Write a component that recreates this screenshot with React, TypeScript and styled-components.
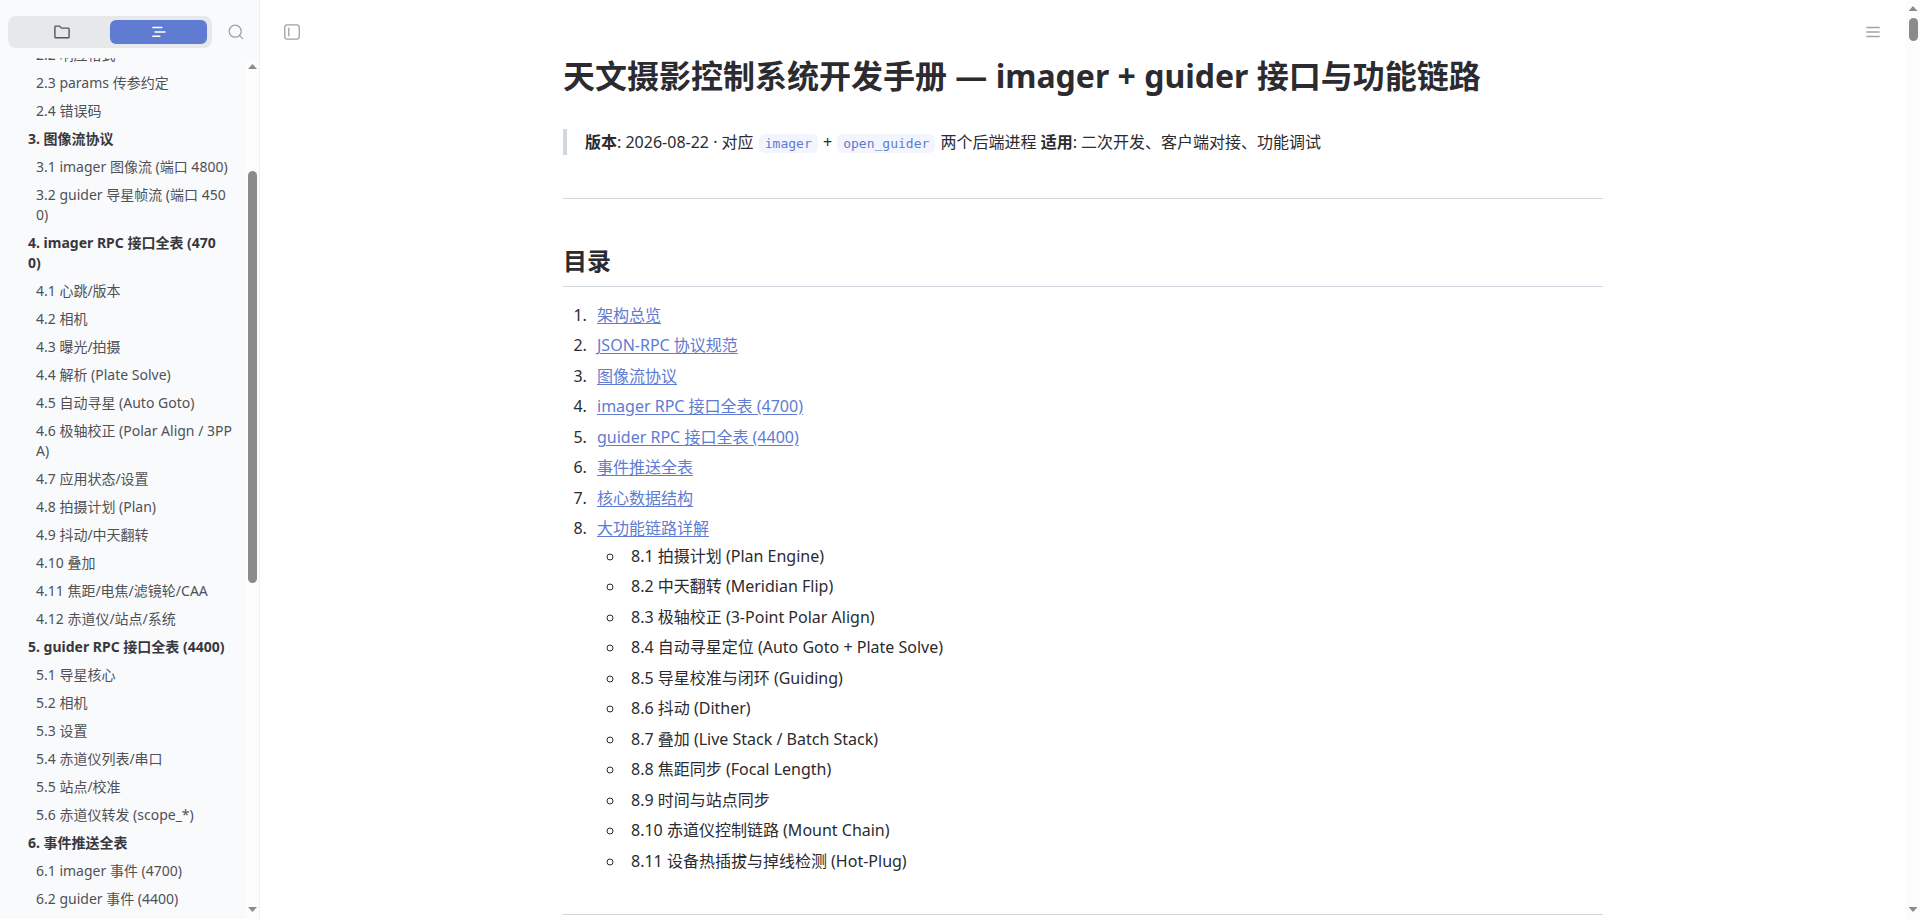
import React from "react";
import styled, { createGlobalStyle } from "styled-components";

const sans = `"Noto Sans", "Noto Sans CJK SC", sans-serif`;
const mono = `"DejaVu Sans Mono", "Noto Sans CJK SC", monospace`;

const GlobalStyle = createGlobalStyle`
  *, *::before, *::after { box-sizing: border-box; }
  body { margin: 0; background: #fff; font-family: ${sans}; color: #2b2b30; }
  button { border: 0; padding: 0; background: none; font: inherit; cursor: pointer; }
`;

const Shell = styled.div`
  display: flex;
  height: 100vh;
  overflow: hidden;
`;

const Sidebar = styled.aside`
  display: flex;
  flex-direction: column;
  flex: 0 0 260px;
  border-right: 1px solid #eeeff1;
  background: #f9fafc;
`;

const SidebarHeader = styled.div`
  display: flex;
  align-items: center;
  height: 58px;
  padding: 6px 15px 0 8px;
  gap: 16px;
`;

const Segmented = styled.div`
  display: flex;
  flex: 1;
  height: 32px;
  padding: 4px 5px;
  border-radius: 8px;
  background: #e7e8eb;
`;

const Segment = styled.button<{ $active?: boolean }>`
  display: flex;
  flex: 1;
  align-items: center;
  justify-content: center;
  border-radius: 6px;
  color: ${(p) => (p.$active ? "#ffffff" : "#55565a")};
  background: ${(p) => (p.$active ? "#607bd2" : "transparent")};
`;

const IconButton = styled.button`
  display: flex;
  color: #a0a2a8;
`;

const OutlinePane = styled.div`
  display: flex;
  flex: 1;
  min-height: 0;
`;

const Outline = styled.nav`
  display: flex;
  flex: 1;
  min-width: 0;
  flex-direction: column;
  justify-content: flex-end;
  overflow: hidden;
  padding: 0 12px 6px 20px;
`;

const OutlineItem = styled.a<{ $section?: boolean }>`
  flex: none;
  padding: ${(p) => (p.$section ? "4px 8px" : "4px 0 4px 16px")};
  font-size: 14px;
  line-height: 20px;
  font-weight: ${(p) => (p.$section ? 700 : 400)};
  color: ${(p) => (p.$section ? "#38383c" : "#505156")};
  text-decoration: none;
  word-break: break-all;
`;

const Track = styled.div<{ $width: number }>`
  display: flex;
  flex: 0 0 ${(p) => p.$width}px;
  flex-direction: column;
  align-items: center;
  padding: 6px 0 7px;
  background: #fcfcfc;
`;

const Thumb = styled.div<{ $before: number; $length: number }>`
  width: 9px;
  height: ${(p) => p.$length}%;
  margin: ${(p) => p.$before}px 0 auto;
  border-radius: 5px;
  background: #8b8b8b;
`;

const Arrow = styled.span<{ $down?: boolean }>`
  width: 9px;
  height: 5px;
  background: #8b8b8b;
  clip-path: ${(p) => (p.$down ? "polygon(0 0, 100% 0, 50% 100%)" : "polygon(50% 0, 100% 100%, 0 100%)")};
`;

const Main = styled.main`
  display: flex;
  flex: 1;
  min-width: 0;
`;

const Page = styled.div`
  display: grid;
  flex: 1;
  min-width: 0;
  grid-template-columns: 1fr minmax(0, 1040px) 1fr;
  align-items: start;
  overflow: hidden;
`;

const Corner = styled.div<{ $end?: boolean }>`
  display: flex;
  justify-content: ${(p) => (p.$end ? "flex-end" : "flex-start")};
  padding: 24px 25px 0 24px;
`;

const Article = styled.article`
  padding-top: 50px;
  font-size: 16px;
  line-height: 26px;
`;

const Title = styled.h1`
  margin: 0 0 27px;
  font-size: 32px;
  line-height: 52px;
  font-weight: 700;
  color: #2b2b30;
`;

const Quote = styled.blockquote`
  margin: 0 0 43px;
  padding-left: 18px;
  border-left: 4px solid #d0d7de;
`;

const Code = styled.code`
  margin: 0 1px;
  padding: 2px 6px;
  border-radius: 6px;
  background: #f2f5fe;
  color: #5f7ad0;
  font-family: ${mono};
  font-size: 13px;
  line-height: 16px;
`;

const Rule = styled.hr`
  height: 1px;
  margin: 36px 0 40px;
  border: 0;
  background: #d0d7de;
`;

const Heading = styled.h2`
  margin: 0 0 15px;
  padding-bottom: 4px;
  border-bottom: 1px solid #d0d7de;
  font-size: 24px;
  line-height: 43px;
  font-weight: 700;
`;

const listRows = `
  display: grid;
  grid-auto-rows: minmax(30px, auto) minmax(31px, auto);
  margin: 0;
`;

const Contents = styled.ol`
  ${listRows}
  padding-left: 28px;
`;

const SubContents = styled.ul`
  ${listRows}
  padding-left: 28px;
  margin-top: 2px;
  list-style: circle;
`;

const Entry = styled.li`
  padding-left: 6px;
`;

const Link = styled.a`
  color: #607bd2;
  text-decoration: underline;
  text-underline-offset: 2px;
`;

const FolderIcon = () => (
  <svg width="16" height="16" viewBox="0 0 16 16" fill="none" stroke="currentColor" strokeWidth="1.4" strokeLinejoin="round">
    <path d="M.9 12.9V3q0-.9.9-.9h3.8l1.8 2h6.8q.9 0 .9.9v7.9q0 .9-.9.9H1.8q-.9 0-.9-.9Z" />
  </svg>
);

const OutlineIcon = () => (
  <svg width="14" height="14" viewBox="0 0 14 14" fill="none" stroke="currentColor" strokeWidth="1.5" strokeLinecap="round">
    <path d="M.8 2.6h9M3 6.9h10M.8 11.2h7" />
  </svg>
);

const SearchIcon = () => (
  <svg width="16" height="16" viewBox="0 0 16 16" fill="none" stroke="currentColor" strokeWidth="1.3" strokeLinecap="round">
    <circle cx="7.2" cy="7.2" r="6" />
    <path d="m11.6 11.6 3 3" />
  </svg>
);

const PanelIcon = () => (
  <svg width="16" height="16" viewBox="0 0 16 16" fill="none" stroke="currentColor" strokeWidth="1.3" strokeLinecap="round">
    <rect x=".8" y=".8" width="14.4" height="14.4" rx="2.4" />
    <path d="M4.8 4.2v7.6" />
  </svg>
);

const MenuIcon = () => (
  <svg width="16" height="16" viewBox="0 0 16 16" fill="none" stroke="currentColor" strokeWidth="1.3">
    <path d="M1.3 3.5h13.4M1.3 8h13.4M1.3 12.5h13.4" />
  </svg>
);

const outline = [
  "2.2 响应格式",
  "2.3 params 传参约定",
  "2.4 错误码",
  "3. 图像流协议",
  "3.1 imager 图像流 (端口 4800)",
  "3.2 guider 导星帧流 (端口 4500)",
  "4. imager RPC 接口全表 (4700)",
  "4.1 心跳/版本",
  "4.2 相机",
  "4.3 曝光/拍摄",
  "4.4 解析 (Plate Solve)",
  "4.5 自动寻星 (Auto Goto)",
  "4.6 极轴校正 (Polar Align / 3PPA)",
  "4.7 应用状态/设置",
  "4.8 拍摄计划 (Plan)",
  "4.9 抖动/中天翻转",
  "4.10 叠加",
  "4.11 焦距/电焦/滤镜轮/CAA",
  "4.12 赤道仪/站点/系统",
  "5. guider RPC 接口全表 (4400)",
  "5.1 导星核心",
  "5.2 相机",
  "5.3 设置",
  "5.4 赤道仪列表/串口",
  "5.5 站点/校准",
  "5.6 赤道仪转发 (scope_*)",
  "6. 事件推送全表",
  "6.1 imager 事件 (4700)",
  "6.2 guider 事件 (4400)",
];

const chapters = [
  "架构总览",
  "JSON-RPC 协议规范",
  "图像流协议",
  "imager RPC 接口全表 (4700)",
  "guider RPC 接口全表 (4400)",
  "事件推送全表",
  "核心数据结构",
  "大功能链路详解",
];

const flows = [
  "8.1 拍摄计划 (Plan Engine)",
  "8.2 中天翻转 (Meridian Flip)",
  "8.3 极轴校正 (3-Point Polar Align)",
  "8.4 自动寻星定位 (Auto Goto + Plate Solve)",
  "8.5 导星校准与闭环 (Guiding)",
  "8.6 抖动 (Dither)",
  "8.7 叠加 (Live Stack / Batch Stack)",
  "8.8 焦距同步 (Focal Length)",
  "8.9 时间与站点同步",
  "8.10 赤道仪控制链路 (Mount Chain)",
  "8.11 设备热插拔与掉线检测 (Hot-Plug)",
];

export default function App() {
  return (
    <>
      <GlobalStyle />
      <Shell>
        <Sidebar>
          <SidebarHeader>
            <Segmented>
              <Segment aria-label="文件"><FolderIcon /></Segment>
              <Segment $active aria-label="大纲"><OutlineIcon /></Segment>
            </Segmented>
            <IconButton aria-label="搜索"><SearchIcon /></IconButton>
          </SidebarHeader>
          <OutlinePane>
            <Outline>
              {outline.map((text) => (
                <OutlineItem key={text} href={`#${text.split(" ")[0]}`} $section={/^\d+\. /.test(text)}>
                  {text}
                </OutlineItem>
              ))}
            </Outline>
            <Track $width={13}>
              <Arrow />
              <Thumb $before={102} $length={48.6} />
              <Arrow $down />
            </Track>
          </OutlinePane>
        </Sidebar>
        <Main>
          <Page>
            <Corner>
              <IconButton aria-label="切换侧边栏"><PanelIcon /></IconButton>
            </Corner>
            <Article>
              <Title>天文摄影控制系统开发手册 — imager + guider 接口与功能链路</Title>
              <Quote>
                <strong>版本</strong>: 2026-08-22 · 对应 <Code>imager</Code> + <Code>open_guider</Code> 两个后端进程{" "}
                <strong>适用</strong>: 二次开发、客户端对接、功能调试
              </Quote>
              <Rule />
              <Heading>目录</Heading>
              <Contents>
                {chapters.map((text, i) => (
                  <Entry key={text}>
                    <Link href={`#${i + 1}`}>{text}</Link>
                    {i === chapters.length - 1 && (
                      <SubContents>
                        {flows.map((flow) => (
                          <Entry key={flow}>{flow}</Entry>
                        ))}
                      </SubContents>
                    )}
                  </Entry>
                ))}
              </Contents>
              <Rule />
            </Article>
            <Corner $end>
              <IconButton aria-label="菜单"><MenuIcon /></IconButton>
            </Corner>
          </Page>
          <Track $width={14}>
            <Arrow />
            <Thumb $before={7} $length={2.5} />
            <Arrow $down />
          </Track>
        </Main>
      </Shell>
    </>
  );
}
